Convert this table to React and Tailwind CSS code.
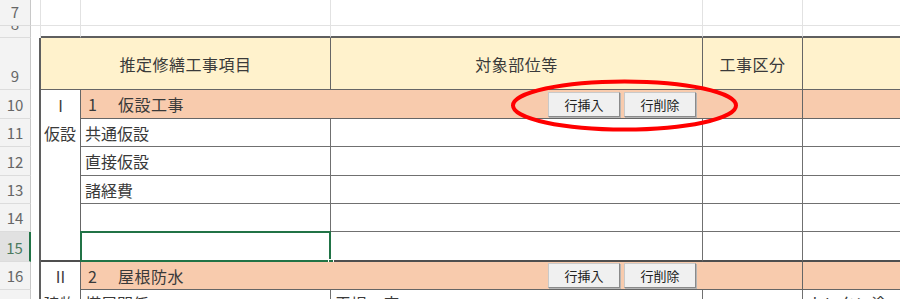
function Btn({ children }) {
  return (
    <div className="flex h-[25px] w-[72px] items-center justify-center border border-[#c9c9c9] border-r-[#8a8a8a] border-b-[#8a8a8a] bg-[#f0f0f0] text-[13px] leading-none text-[#222] shadow-[1px_1px_0_#b5b5b5]">
      {children}
    </div>
  );
}

function RH({ pos, children, sel }) {
  return (
    <div
      className={`${pos} flex items-end justify-center overflow-hidden border-b border-b-[#dcdcdc] pb-[4px] text-[15px] leading-[18px] ${
        sel
          ? "border-r-2 border-r-[#217346] bg-[#e1e1e1] text-[#4b7a5e]"
          : "border-r border-r-[#c8c8c8] bg-[#f3f3f3] text-[#666]"
      }`}
    >
      {children}
    </div>
  );
}

export default function App() {
  return (
    <div className="relative h-[299px] w-[900px] overflow-hidden bg-white font-['Noto_Sans_CJK_JP','Noto_Sans',sans-serif] text-[#3a3a3a]">
      <div className="grid grid-cols-[31px_10px_40px_250px_372px_100px_1fr] grid-rows-[26px_12px_52px_29px_28px_29px_28px_28px_30px_28px_40px]">
        {/* Row headers */}
        <RH pos="col-start-1 row-start-1">7</RH>
        <RH pos="col-start-1 row-start-2">8</RH>
        <RH pos="col-start-1 row-start-3">9</RH>
        <RH pos="col-start-1 row-start-4">10</RH>
        <RH pos="col-start-1 row-start-5">11</RH>
        <RH pos="col-start-1 row-start-6">12</RH>
        <RH pos="col-start-1 row-start-7">13</RH>
        <RH pos="col-start-1 row-start-8">14</RH>
        <RH pos="col-start-1 row-start-9" sel>15</RH>
        <RH pos="col-start-1 row-start-10">16</RH>
        <RH pos="col-start-1 row-start-11">17</RH>

        {/* Rows 7-8 gridlines */}
        <div className="col-start-2 row-start-1 border-r border-b border-[#e2e2e2]" />
        <div className="col-start-3 row-start-1 border-r border-b border-[#e2e2e2]" />
        <div className="col-start-4 row-start-1 border-r border-b border-[#e2e2e2]" />
        <div className="col-start-5 row-start-1 border-r border-b border-[#e2e2e2]" />
        <div className="col-start-6 row-start-1 border-r border-b border-[#e2e2e2]" />
        <div className="col-start-7 row-start-1 border-b border-[#e2e2e2]" />
        <div className="col-start-2 row-start-2 border-r border-r-[#e2e2e2]" />
        <div className="col-start-3 row-start-2 border-r border-r-[#e2e2e2] border-b-2 border-b-[#5f5f5f]" />
        <div className="col-start-4 row-start-2 border-r border-r-[#e2e2e2] border-b-2 border-b-[#5f5f5f]" />
        <div className="col-start-5 row-start-2 border-r border-r-[#e2e2e2] border-b-2 border-b-[#5f5f5f]" />
        <div className="col-start-6 row-start-2 border-r border-r-[#e2e2e2] border-b-2 border-b-[#5f5f5f]" />
        <div className="col-start-7 row-start-2 border-b-2 border-b-[#5f5f5f]" />

        {/* Column A */}
        <div className="col-start-2 row-start-3 row-span-9 border-r-2 border-r-[#5f5f5f]" />

        {/* Row 9 header */}
        <div className="col-start-3 col-span-2 row-start-3 flex items-center justify-center border-r border-b border-[#666] bg-[#fff2cc] text-[16px] tracking-[0.5px]">
          推定修繕工事項目
        </div>
        <div className="col-start-5 row-start-3 flex items-center justify-center border-r border-b border-[#666] bg-[#fff2cc] text-[16px] tracking-[0.5px]">
          対象部位等
        </div>
        <div className="col-start-6 row-start-3 flex items-center justify-center border-r border-b border-[#666] bg-[#fff2cc] text-[16px] tracking-[0.5px]">
          工事区分
        </div>
        <div className="col-start-7 row-start-3 border-b border-[#666] bg-[#fff2cc]" />

        {/* Section I */}
        <div className="col-start-3 row-start-4 row-span-6 flex flex-col border-r border-b-2 border-r-[#666] border-b-[#4f4f4f] text-[16px]">
          <div className="flex h-[29px] items-center justify-center">I</div>
          <div className="pl-[3px] leading-[28px]">仮設</div>
        </div>
        <div className="relative col-start-4 col-span-3 row-start-4 flex items-center border-r border-b border-[#666] bg-[#f8cbad] text-[16px]">
          <span className="ml-[7px] w-[30px] shrink-0">1</span>
          <span className="shrink-0 tracking-[0.5px]">仮設工事</span>
          <div className="absolute left-[467px] top-[2px] flex gap-[4px]">
            <Btn>行挿入</Btn>
            <Btn>行削除</Btn>
          </div>
        </div>
        <div className="col-start-7 row-start-4 border-b border-[#666] bg-[#f8cbad]" />

        {/* Rows 11-15 */}
        <div className="col-start-4 row-start-5 flex items-center border-r border-b border-[#707070] pl-[4px] text-[16px]">共通仮設</div>
        <div className="col-start-5 row-start-5 border-r border-b border-[#707070]" />
        <div className="col-start-6 row-start-5 border-r border-b border-[#707070]" />
        <div className="col-start-7 row-start-5 border-b border-[#707070]" />

        <div className="col-start-4 row-start-6 flex items-center border-r border-b border-[#707070] pl-[4px] text-[16px]">直接仮設</div>
        <div className="col-start-5 row-start-6 border-r border-b border-[#707070]" />
        <div className="col-start-6 row-start-6 border-r border-b border-[#707070]" />
        <div className="col-start-7 row-start-6 border-b border-[#707070]" />

        <div className="col-start-4 row-start-7 flex items-center border-r border-b border-[#707070] pl-[4px] text-[16px]">諸経費</div>
        <div className="col-start-5 row-start-7 border-r border-b border-[#707070]" />
        <div className="col-start-6 row-start-7 border-r border-b border-[#707070]" />
        <div className="col-start-7 row-start-7 border-b border-[#707070]" />

        <div className="col-start-4 row-start-8 border-r border-b border-[#707070]" />
        <div className="col-start-5 row-start-8 border-r border-b border-[#707070]" />
        <div className="col-start-6 row-start-8 border-r border-b border-[#707070]" />
        <div className="col-start-7 row-start-8 border-b border-[#707070]" />

        <div className="relative col-start-4 row-start-9 border-r border-b-2 border-r-[#707070] border-b-[#4f4f4f]">
          <div className="absolute -top-px -left-px -right-px -bottom-[2px] border-2 border-[#217346]" />
          <div className="absolute -right-[4px] -bottom-[5px] h-[6px] w-[6px] border border-white bg-[#217346]" />
        </div>
        <div className="col-start-5 row-start-9 border-r border-b-2 border-r-[#707070] border-b-[#4f4f4f]" />
        <div className="col-start-6 row-start-9 border-r border-b-2 border-r-[#707070] border-b-[#4f4f4f]" />
        <div className="col-start-7 row-start-9 border-b-2 border-b-[#4f4f4f]" />

        {/* Section II */}
        <div className="col-start-3 row-start-10 flex items-center justify-center border-r border-r-[#666] text-[16px]">II</div>
        <div className="relative col-start-4 col-span-3 row-start-10 flex items-center border-r border-b border-[#666] bg-[#f8cbad] text-[16px]">
          <span className="ml-[7px] w-[30px] shrink-0">2</span>
          <span className="shrink-0 tracking-[0.5px]">屋根防水</span>
          <div className="absolute left-[467px] top-[1px] flex gap-[4px]">
            <Btn>行挿入</Btn>
            <Btn>行削除</Btn>
          </div>
        </div>
        <div className="col-start-7 row-start-10 border-b border-[#666] bg-[#f8cbad]" />

        {/* Row 17 */}
        <div className="col-start-3 row-start-11 border-r border-r-[#666] pl-[3px] pt-[1px] text-[16px] leading-[24px]">建物</div>
        <div className="col-start-4 row-start-11 border-r border-r-[#707070] pl-[4px] pt-[1px] text-[16px] leading-[24px]">塔屋関係</div>
        <div className="col-start-5 row-start-11 border-r border-r-[#707070] pl-[4px] pt-[1px] text-[16px] leading-[24px]">平場・床</div>
        <div className="col-start-6 row-start-11 border-r border-r-[#707070]" />
        <div className="col-start-7 row-start-11 pl-[4px] pt-[1px] text-[16px] leading-[24px]">ウレタン塗膜防水</div>
      </div>

      {/* Red annotation ellipse */}
      <svg className="pointer-events-none absolute left-[510px] top-[78px]" width="230" height="56" viewBox="0 0 230 56">
        <ellipse cx="114.5" cy="27.5" rx="111.5" ry="24" fill="none" stroke="#ff0000" strokeWidth="4" />
      </svg>
    </div>
  );
}
